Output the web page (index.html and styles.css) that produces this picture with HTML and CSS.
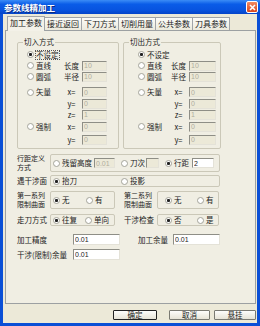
FILE: index.html
```html
<!DOCTYPE html>
<html>
<head>
    <meta charset="utf-8">
    <title>参数线精加工</title>

    <link rel="stylesheet" href="styles.css">
</head>
<body>

<div class="window">

    <div class="titlebar">
        <span class="title">参数线精加工</span>
        <span class="close">
            <svg width="7" height="7" viewBox="0 0 7 7"><path d="M1 1 L6 6 M6 1 L1 6" stroke="#fff" stroke-width="1.6"/></svg>
        </span>
    </div>

    <div class="client">

        <div class="tabs">
            <span class="tab active">加工参数</span>
            <span class="tab">接近返回</span>
            <span class="tab">下刀方式</span>
            <span class="tab">切削用量</span>
            <span class="tab">公共参数</span>
            <span class="tab">刀具参数</span>
        </div>

        <div class="panel">

            <div class="groups">
                <fieldset class="group group-in">
                    <legend>切入方式</legend>
                    <div class="opt-row first"><label class="radio-lbl"><span class="radio on"></span><span class="focus">不设定</span></label></div>
                    <div class="opt-row"><label class="radio-lbl"><span class="radio"></span>直线</label><span class="fld-lbl">长度</span><input class="fld" value="10" disabled></div>
                    <div class="opt-row"><label class="radio-lbl"><span class="radio"></span>圆弧</label><span class="fld-lbl">半径</span><input class="fld" value="10" disabled></div>
                    <div class="opt-row spaced"><label class="radio-lbl"><span class="radio"></span>矢量</label><span class="fld-lbl">x=</span><input class="fld" value="0" disabled></div>
                    <div class="opt-row"><span class="radio-lbl"></span><span class="fld-lbl">y=</span><input class="fld" value="0" disabled></div>
                    <div class="opt-row"><span class="radio-lbl"></span><span class="fld-lbl">z=</span><input class="fld" value="1" disabled></div>
                    <div class="opt-row tall"><label class="radio-lbl"><span class="radio"></span>强制</label><span class="fld-lbl">x=</span><input class="fld" value="0" disabled></div>
                    <div class="opt-row tall"><span class="radio-lbl"></span><span class="fld-lbl">y=</span><input class="fld" value="0" disabled></div>
                </fieldset>

                <fieldset class="group group-out">
                    <legend>切出方式</legend>
                    <div class="opt-row first"><label class="radio-lbl"><span class="radio on"></span>不设定</label></div>
                    <div class="opt-row"><label class="radio-lbl"><span class="radio"></span>直线</label><span class="fld-lbl">长度</span><input class="fld" value="10" disabled></div>
                    <div class="opt-row"><label class="radio-lbl"><span class="radio"></span>圆弧</label><span class="fld-lbl">半径</span><input class="fld" value="10" disabled></div>
                    <div class="opt-row spaced"><label class="radio-lbl"><span class="radio"></span>矢量</label><span class="fld-lbl">x=</span><input class="fld" value="0" disabled></div>
                    <div class="opt-row"><span class="radio-lbl"></span><span class="fld-lbl">y=</span><input class="fld" value="0" disabled></div>
                    <div class="opt-row"><span class="radio-lbl"></span><span class="fld-lbl">z=</span><input class="fld" value="1" disabled></div>
                    <div class="opt-row tall"><label class="radio-lbl"><span class="radio"></span>强制</label><span class="fld-lbl">x=</span><input class="fld" value="0" disabled></div>
                    <div class="opt-row tall"><span class="radio-lbl"></span><span class="fld-lbl">y=</span><input class="fld" value="0" disabled></div>
                </fieldset>
            </div>

            <!-- 行距 -->
            <div class="line line-step">
                <span class="line-lbl two">行距定义<br>方式</span>
                <div class="box box-wide">
                    <label class="opt w68"><span class="radio"></span>残留高度<input class="fld small" value="0.01" disabled></label>
                    <label class="opt"><span class="radio"></span>刀次<input class="fld tiny" value="" disabled></label>
                    <label class="opt gap"><span class="radio on"></span>行距<input class="fld on-fld" value="2"></label>
                </div>
            </div>

            <div class="line line-face">
                <span class="line-lbl">遇干涉面</span>
                <div class="box box-wide">
                    <label class="opt w68"><span class="radio on"></span>抬刀</label>
                    <label class="opt"><span class="radio"></span>投影</label>
                </div>
            </div>

            <div class="line line-limit">
                <span class="line-lbl two">第一系列<br>限制曲面</span>
                <div class="box box-left">
                    <label class="opt w33"><span class="radio on"></span>无</label>
                    <label class="opt"><span class="radio"></span>有</label>
                </div>
                <span class="line-lbl two right">第二系列<br>限制曲面</span>
                <div class="box box-right">
                    <label class="opt w32"><span class="radio on"></span>无</label>
                    <label class="opt"><span class="radio"></span>有</label>
                </div>
            </div>

            <div class="line line-mode">
                <span class="line-lbl">走刀方式</span>
                <div class="box box-left">
                    <label class="opt w32"><span class="radio on"></span>往复</label>
                    <label class="opt"><span class="radio"></span>单向</label>
                </div>
                <span class="line-lbl right">干涉检查</span>
                <div class="box box-right">
                    <label class="opt w32"><span class="radio on"></span>否</label>
                    <label class="opt"><span class="radio"></span>是</label>
                </div>
            </div>

            <div class="line line-val">
                <span class="val-lbl">加工精度</span>
                <input class="fld val" value="0.01">
                <span class="val-lbl2">加工余量</span>
                <input class="fld val" value="0.01">
            </div>

            <div class="line line-val2">
                <span class="val-lbl">干涉(限制)余量</span>
                <input class="fld val" value="0.01">
            </div>

        </div>

        <div class="buttons">
            <button class="btn default">确定</button>
            <button class="btn cancel">取消</button>
            <button class="btn hang">悬挂</button>
        </div>

    </div>
</div>

</body>
</html>
```

FILE: styles.css
```css
/* Window frame */

body {
    margin: 0;
    font-family: "Noto Sans CJK SC", "Noto Sans", sans-serif;
    font-size: 7.5px;
    line-height: 10px;
    color: #222;
    background: #fff;
}

.window {
    width: 260px;
    height: 326px;
    box-sizing: border-box;
    background: #ece9d8;
    border: 3px solid #0a4fd6;
    border-top: 0;
    display: flex;
    flex-direction: column;
}

.titlebar {
    height: 14px;
    margin: 0 -3px;
    display: flex;
    align-items: center;
    justify-content: space-between;
    padding: 0 2px 0 4px;
    background: linear-gradient(#3b8cf6 0%, #0a5ce8 30%, #0854e0 70%, #0444c8 100%);
}

.title {
    color: #fff;
    font-weight: bold;
    font-size: 8.5px;
    text-shadow: 1px 1px 0 #0a2a80;
}

.close {
    display: flex;
    align-items: center;
    justify-content: center;
    width: 10px;
    height: 10px;
    border: 1px solid #fff;
    border-radius: 2px;
    background: linear-gradient(#f28a62, #d9461c);
}

.client {
    flex: 1;
    display: flex;
    flex-direction: column;
}

/* Tabs */

.tabs {
    display: flex;
    align-items: flex-end;
    height: 13px;
    margin: 3px 0 0 4px;
}

.tab {
    height: 12px;
    padding: 0 2px;
    border: 1px solid #a0a4a8;
    border-bottom: 0;
    border-left: 0;
    font-size: 8px;
    line-height: 12px;
    background: linear-gradient(#fbfbf8, #ece9dc);
}

.tab.active {
    height: 14px;
    border-left: 1px solid #a0a4a8;
    background: #f3f1e8;
    position: relative;
    top: 1px;
}

.panel {
    height: 274px;
    box-sizing: border-box;
    margin: 0 1px 0 2px;
    padding: 6px 0 0 11px;
    border: 1px solid #9ca0a2;
    background: #f0eee3;
}

/* Group boxes */

.groups {
    display: flex;
    gap: 4px;
}

.group {
    margin: 0;
    padding: 0;
    height: 112px;
    box-sizing: border-box;
    border: 1px solid #cbc8b8;
    border-radius: 2px;
}

.group legend {
    padding: 0 1px;
    line-height: 10px;
}

.group-in {
    width: 102px;
    padding-left: 9px;
}

.group-in legend {
    margin-left: -4px;
}

.group-out {
    width: 98px;
    padding-left: 14px;
}

.group-out legend {
    margin-left: -9px;
}

.opt-row {
    display: flex;
    align-items: center;
    height: 11px;
}

.opt-row.first {
    margin-top: 2px;
}

.opt-row.spaced {
    margin-top: 4px;
    height: 12px;
}

.opt-row.tall {
    height: 13px;
}

.radio-lbl {
    display: flex;
    align-items: center;
    width: 36px;
}

.group-out .radio-lbl {
    width: 32px;
}

.focus {
    outline: 1px dotted #555;
    line-height: 8px;
}

.fld-lbl {
    width: 17px;
    text-align: center;
}

.radio {
    width: 7px;
    height: 7px;
    margin-right: 2px;
    box-sizing: border-box;
    border: 1px solid #a4a49a;
    border-radius: 50%;
    background: #fff;
    flex: none;
}

.radio.on {
    background: radial-gradient(circle, #222 0 1.3px, #fff 1.8px);
}

/* Inputs */

.fld {
    width: 25px;
    height: 10px;
    margin-left: 2px;
    padding: 0 0 0 1px;
    box-sizing: border-box;
    border: 1px solid;
    border-color: #8e8e86 #e4e2d8 #e4e2d8 #8e8e86;
    background: #fff;
    font-family: "Liberation Sans", sans-serif;
    font-size: 7px;
    color: #222;
}

.fld:disabled {
    background: #ece9d8;
    color: #b0ad9e;
}

.group-out .fld {
    width: 27px;
}

.fld.small {
    width: 21px;
}

.fld.tiny {
    width: 13px;
    margin-left: 1px;
}

.fld.on-fld {
    width: 22px;
    margin-left: 3px;
}

.fld.val {
    width: 47px;
    height: 11px;
}

/* Lower rows */

.line {
    display: flex;
    align-items: center;
}

.line-lbl {
    width: 33px;
    flex: none;
}

.line-lbl.two {
    font-size: 7px;
    line-height: 9px;
}

.line-lbl.right {
    margin-left: 9px;
    width: 33px;
}

.box {
    display: flex;
    align-items: center;
    box-sizing: border-box;
    padding-left: 2px;
    border: 1px solid #cbc8b8;
    border-radius: 2px;
}

.box-wide {
    width: 170px;
}

.box-left {
    width: 65px;
}

.box-right {
    width: 62px;
    padding-left: 7px;
}

.opt {
    display: flex;
    align-items: center;
}

.opt.w68 {
    width: 68px;
}

.opt.w33 {
    width: 33px;
}

.opt.w32 {
    width: 32px;
}

.opt.gap {
    margin-left: 6px;
}

.line-step {
    margin-top: 5px;
}

.line-step .box {
    height: 18px;
}

.line-face {
    margin-top: 3px;
}

.line-face .box {
    height: 12px;
}

.line-limit {
    margin-top: 4px;
}

.line-limit .box {
    height: 18px;
}

.line-mode {
    margin-top: 5px;
}

.line-mode .box {
    height: 12px;
}

.line-val {
    margin-top: 8px;
}

.line-val2 {
    margin-top: 4px;
}

.val-lbl {
    width: 54px;
}

.val-lbl2 {
    margin-left: 18px;
    width: 33px;
}

/* Buttons */

.buttons {
    display: flex;
    justify-content: flex-end;
    margin: 6px 1px 0 0;
}

.btn {
    height: 10px;
    padding: 0;
    border: 1px solid #7a7a72;
    border-radius: 1px;
    background: linear-gradient(#fdfdfb, #e6e3d6);
    font-family: "Noto Sans CJK SC", sans-serif;
    font-size: 7.5px;
    line-height: 8px;
    color: #222;
}

.btn.default {
    width: 44px;
    border: 1px solid #222;
}

.btn.cancel {
    width: 41px;
    margin-left: 12px;
}

.btn.hang {
    width: 42px;
    margin-left: 4px;
}
```
